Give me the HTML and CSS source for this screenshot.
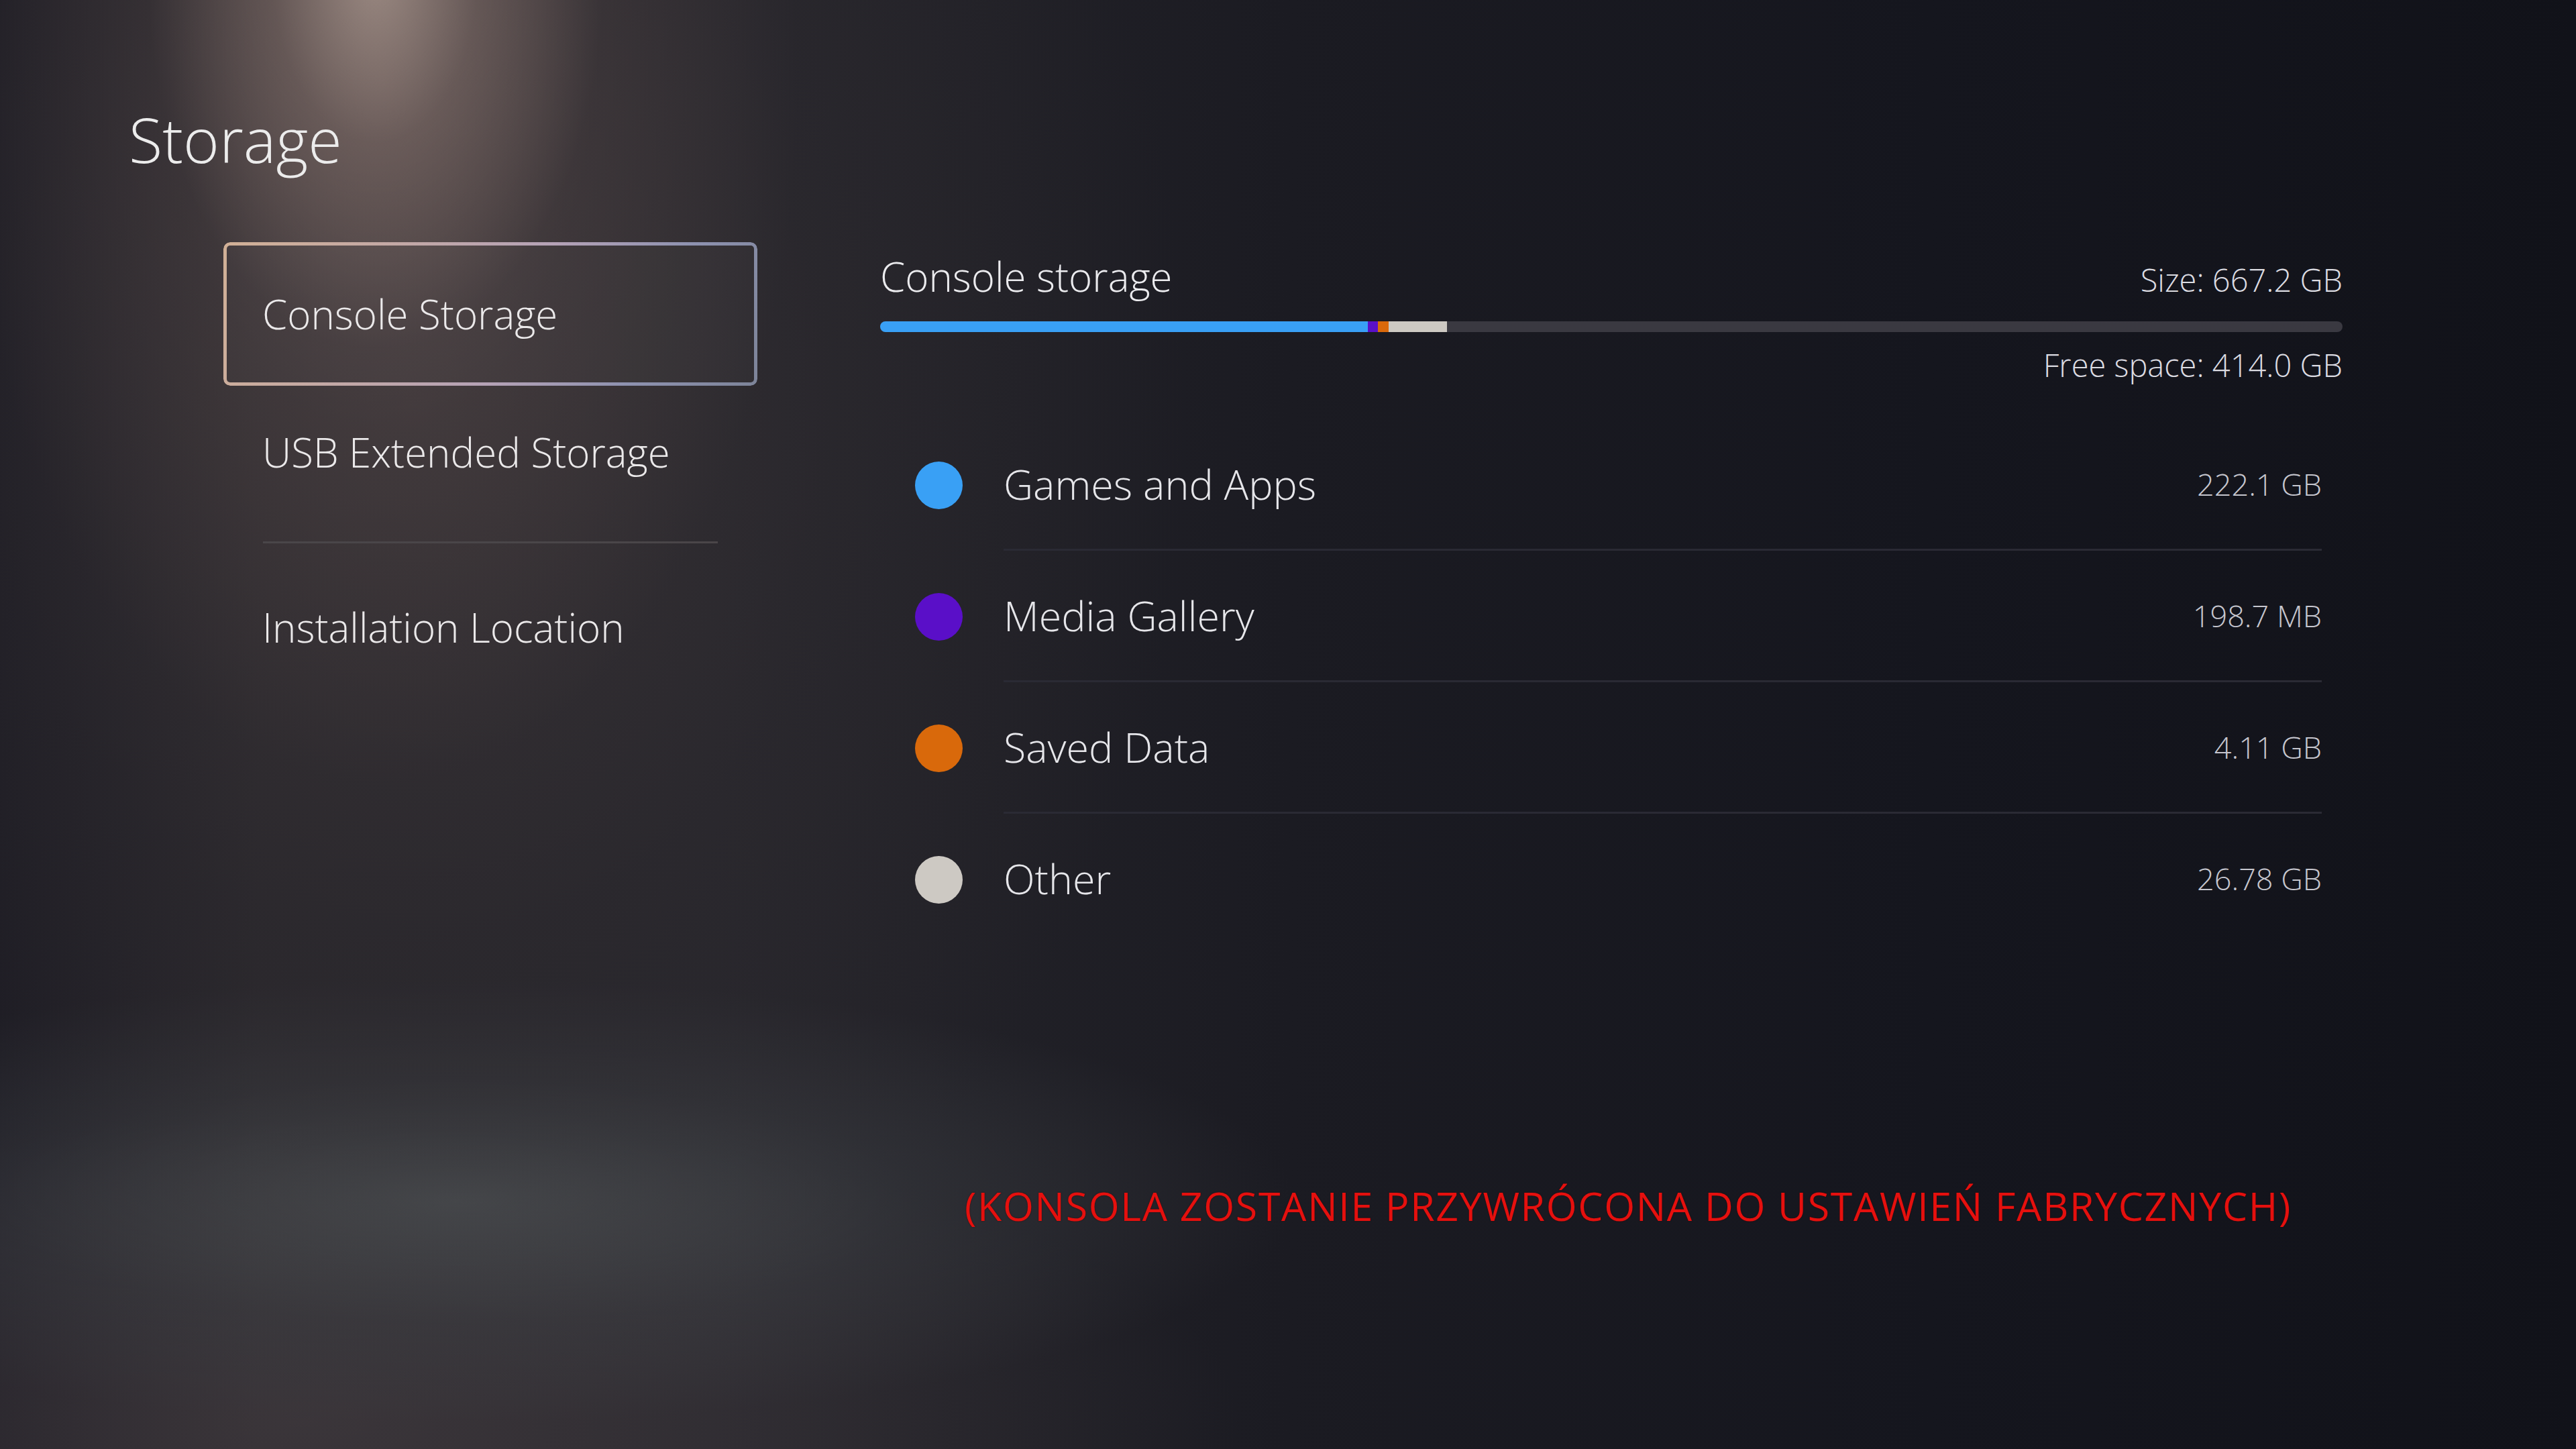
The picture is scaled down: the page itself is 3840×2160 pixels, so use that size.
FILE: index.html
```html
<!DOCTYPE html>
<html lang="en">
<head>
<meta charset="utf-8">
<title>Storage</title>
<link rel="stylesheet" href="styles.css">
</head>
<body>
<div class="screen">
  <h1 class="title">Storage</h1>
  <div class="content">
    <nav class="nav">
      <div class="nav-item active">Console Storage</div>
      <div class="nav-item">USB Extended Storage</div>
      <div class="nav-divider"></div>
      <div class="nav-item">Installation Location</div>
    </nav>
    <main class="panel">
      <div class="panel-head">
        <span class="panel-title">Console storage</span>
        <span class="meta">Size: 667.2 GB</span>
      </div>
      <div class="bar">
        <span class="seg seg-games" style="width:727px"></span>
        <span class="seg seg-media" style="width:15px"></span>
        <span class="seg seg-saved" style="width:16px"></span>
        <span class="seg seg-other" style="width:87px"></span>
      </div>
      <div class="free meta">Free space: 414.0 GB</div>
      <ul class="rows">
        <li class="row">
          <span class="dot dot-games"></span>
          <div class="row-body"><span class="row-label">Games and Apps</span><span class="row-value">222.1 GB</span></div>
        </li>
        <li class="row">
          <span class="dot dot-media"></span>
          <div class="row-body"><span class="row-label">Media Gallery</span><span class="row-value">198.7 MB</span></div>
        </li>
        <li class="row">
          <span class="dot dot-saved"></span>
          <div class="row-body"><span class="row-label">Saved Data</span><span class="row-value">4.11 GB</span></div>
        </li>
        <li class="row">
          <span class="dot dot-other"></span>
          <div class="row-body"><span class="row-label">Other</span><span class="row-value">26.78 GB</span></div>
        </li>
      </ul>
      <p class="warning">(KONSOLA ZOSTANIE PRZYWRÓCONA DO USTAWIEŃ FABRYCZNYCH)</p>
    </main>
  </div>
</div>
</body>
</html>
```

FILE: styles.css
```css
* { box-sizing: border-box; }

html, body {
  margin: 0;
  padding: 0;
  width: 3840px;
  height: 2160px;
  overflow: hidden;
  background: #15151d;
}

.screen {
  width: 3840px;
  height: 2160px;
  display: flex;
  flex-direction: column;
  font-family: "Open Sans", "Noto Sans", sans-serif;
  font-weight: 300;
  color: #ebe9ea;
  background:
    radial-gradient(ellipse 340px 560px at 560px -40px, rgba(180,160,150,0.75) 0%, rgba(145,125,118,0.4) 45%, rgba(120,100,95,0) 100%),
    radial-gradient(ellipse 620px 1050px at 570px 120px, rgba(112,94,92,0.55) 0%, rgba(92,78,78,0.28) 50%, rgba(80,70,70,0) 100%),
    radial-gradient(ellipse 1150px 1500px at 620px 600px, rgba(64,57,59,0.65) 0%, rgba(50,46,50,0.35) 55%, rgba(40,38,44,0) 100%),
    radial-gradient(ellipse 1250px 330px at 680px 1790px, rgba(90,96,98,0.6) 0%, rgba(72,76,80,0.3) 55%, rgba(60,60,66,0) 100%),
    radial-gradient(ellipse 1400px 450px at 450px 2120px, rgba(74,66,70,0.55) 0%, rgba(60,55,60,0) 100%),
    linear-gradient(90deg, #1c1b23 0%, #28262b 10%, #26252b 28%, #1b1b22 50%, #15161e 75%, #111219 100%);
}

.title {
  margin: 0;
  padding: 162px 0 0 192px;
  font-size: 92px;
  line-height: 92px;
  font-weight: 300;
  color: #ececec;
}

.content {
  display: flex;
  margin-top: 111px;
}

/* ---------- left navigation ---------- */
.nav {
  margin-left: 337px;
  width: 788px;
  display: flex;
  flex-direction: column;
}

.nav-item {
  position: relative;
  height: 206px;
  display: flex;
  align-items: center;
  padding-left: 54px;
  font-size: 60px;
  line-height: 1;
  color: #ebe9ea;
}

.nav-item.active::before {
  content: "";
  position: absolute;
  inset: -4px;
  border-radius: 10px;
  padding: 5px;
  background: linear-gradient(115deg, #d1b096 0%, #c2a8a6 30%, #b5a2b6 55%, #8e92b0 78%, #7d8499 100%);
  -webkit-mask: linear-gradient(#000 0 0) content-box, linear-gradient(#000 0 0);
  -webkit-mask-composite: xor;
  mask-composite: exclude;
}

.nav-item.active::after {
  content: "";
  position: absolute;
  inset: 1px;
  border-radius: 6px;
  background: rgba(255,255,255,0.02);
}

.nav-divider {
  margin: 30px 0 22px 55px;
  width: 678px;
  height: 3px;
  background: #4a4649;
}

/* ---------- right panel ---------- */
.panel {
  margin-left: 187px;
  width: 2180px;
  padding-top: 17px;
  display: flex;
  flex-direction: column;
}

.panel-head {
  display: flex;
  justify-content: space-between;
  align-items: baseline;
}

.panel-title {
  font-size: 60px;
  line-height: 60px;
  color: #ebebee;
}

.meta {
  font-size: 47px;
  line-height: 47px;
  color: #dcdce2;
}

.bar {
  margin-top: 37px;
  height: 16px;
  border-radius: 8px;
  background: #3a3941;
  overflow: hidden;
  display: flex;
}

.seg { display: block; height: 100%; }
.seg-games { background: #39a0f5; }
.seg-media { background: #5a10c8; }
.seg-saved { background: #d9690b; }
.seg-other { background: #cdc9c3; }

.free {
  margin-top: 26px;
  text-align: right;
}

.rows {
  list-style: none;
  margin: 57px 0 0 0;
  padding: 0;
}

.row {
  display: flex;
  align-items: center;
  height: 196px;
}

.dot {
  flex: none;
  width: 71px;
  height: 71px;
  border-radius: 50%;
  margin-left: 52px;
}
.dot-games { background: #39a0f5; }
.dot-media { background: #5a0fc8; }
.dot-saved { background: #d9690b; }
.dot-other { background: #cdc9c3; }

.row-body {
  flex: 1;
  align-self: stretch;
  margin-left: 61px;
  margin-right: 31px;
  display: flex;
  align-items: center;
  justify-content: space-between;
  border-bottom: 3px solid #2a2a34;
}

.row:last-child .row-body { border-bottom-color: transparent; }

.row-label {
  font-size: 61px;
  line-height: 1;
  color: #e6e6ea;
}

.row-value {
  font-size: 45px;
  line-height: 1;
  color: #c6c6ce;
}

.warning {
  margin: 358px 0 0 126px;
  font-family: "Open Sans", "Noto Sans", sans-serif;
  font-weight: 400;
  font-size: 59px;
  line-height: 60px;
  letter-spacing: 1.7px;
  color: #e5100e;
  text-shadow: 0 0 2px rgba(60,0,0,0.7);
  white-space: nowrap;
}
```
